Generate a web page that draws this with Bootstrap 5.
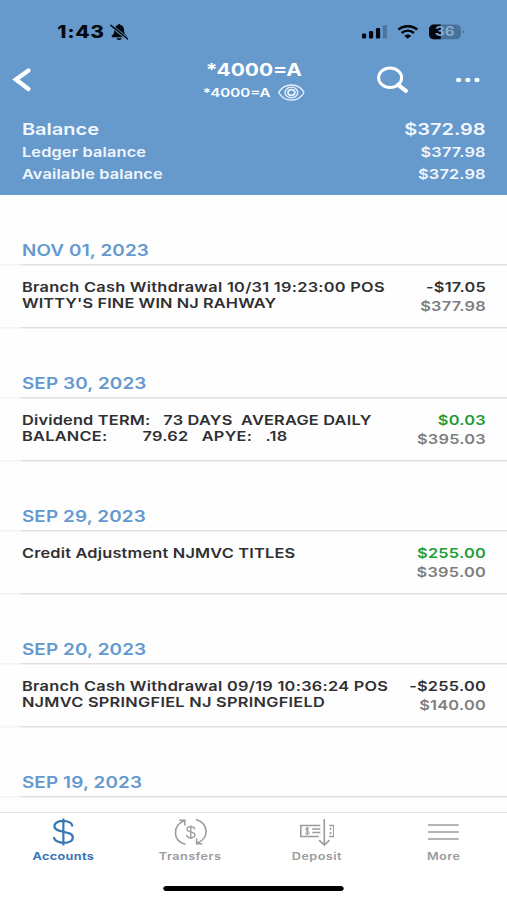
<!DOCTYPE html>
<html lang="en">
<head>
<meta charset="utf-8">
<meta name="viewport" content="width=device-width, initial-scale=1">
<title>Account *4000=A</title>
<link href="https://cdn.jsdelivr.net/npm/bootstrap@5.3.0/dist/css/bootstrap.min.css" rel="stylesheet">
<style>
html,body{overflow:hidden;background:#fff}
body{font-family:Inter,"Liberation Sans",sans-serif;font-weight:600;color:#303033}
/* phone layout, widened horizontally to fill the window */
.phone{width:416px;height:900px;transform:scaleX(1.21875);transform-origin:0 0;overflow:hidden;background:#fefefe}
svg{display:block;flex:none}
.top{background:#6699cc;color:#fff;height:195px}
.status{height:56px;padding:8px 35px 0 47px;color:#05080c}
.clock{font-size:17.2px;font-weight:800;line-height:20px;letter-spacing:.5px}
.bar{height:48px;display:grid;grid-template-columns:1fr auto 1fr;padding:0 22.5px 0 9px}
.ttl{font-size:17.2px;line-height:23px;font-weight:650;padding-top:1px}
.sub{font-size:12.4px;line-height:23px}
.sums{padding:13px 17.5px 0 18px;font-size:13.4px;line-height:22px;color:#f1f7fd;letter-spacing:.13px}
.sums .big{font-size:16.4px;line-height:24px;letter-spacing:0}
.day{height:70px;padding:44px 18px 0;font-size:15.5px;line-height:22px;color:#6499cf;font-weight:600;letter-spacing:.1px}
.line{background:linear-gradient(90deg,#f3f3f3 17px,#e1e1e2 17px) bottom/100% 1.5px no-repeat}
.entry{height:63px;padding:13px 17.3px 0 18px;font-size:13.4px}
.desc{white-space:pre;line-height:16.4px;letter-spacing:.17px}
.desc .wide{letter-spacing:.23px}
.desc .snug{letter-spacing:.1px}
.amt{line-height:18.6px;margin-top:-.6px;letter-spacing:.2px}
.grey{color:#7d7d80}
.green{color:#229c35}
.feed{height:617px;padding-top:.5px;overflow:hidden}
.tabs{height:88px;border-top:1.5px solid #e3e3e4;background:#fff;color:#9b9b9d;font-size:10.4px}
.tab{padding-top:5px}
.tab span{line-height:16px;margin-top:2.5px;letter-spacing:.36px}
.tab.on{color:#3a78b5}
.tab.on span{font-weight:700;font-size:10.3px;letter-spacing:.3px;margin-top:2px}
.home{width:148px;height:5px;border-radius:3px;background:#000;margin:21.5px auto 0}
</style>
<script src="https://cdn.jsdelivr.net/npm/bootstrap@5.3.0/dist/js/bootstrap.bundle.min.js"></script>
</head>
<body>
<div class="phone">
  <header class="top">
    <div class="status d-flex align-items-center">
      <span class="clock">1:43</span>
      <svg class="ms-1" width="15.6" height="18" viewBox="0 0 19 18" preserveAspectRatio="none"><path d="M2 14.2V12.8C4 11.4 4.3 10 4.5 7.4C4.8 4 6.5 2.3 8.3 2C8.5.6 10.5.6 10.7 2C13 2.4 14.3 4 14.5 7.4C14.7 10 15 11.4 17 12.8V14.2ZM6.7 15.2H12.2C11.5 17.6 7.4 17.6 6.7 15.2Z" fill="currentColor"/><path d="M1.2 2.4 18 16" stroke="#6699cc" stroke-width="3.2"/><path d="M1.2 2.4 18 16" stroke="currentColor" stroke-width="1.5" stroke-linecap="round"/></svg>
      <svg class="ms-auto" width="20.5" height="16" viewBox="0 0 25 16" preserveAspectRatio="none" fill="currentColor"><rect y="9.5" width="4.2" height="5" rx="1.2"/><rect x="7" y="7" width="4.2" height="7.5" rx="1.2"/><rect x="14" y="4" width="4.2" height="10.5" rx="1.2"/><rect x="21" y="1.2" width="4" height="13.3" rx="1.2" opacity=".25"/></svg>
      <svg style="margin-left:8.5px" width="17.2" height="14" viewBox="0 0 21 14" preserveAspectRatio="none" fill="none" stroke="currentColor" stroke-width="2.6"><path d="M1 4.6C6.5 0 14.5 0 20 4.6M4.3 8.1C8 5 13 5 16.7 8.1"/><path d="M7 10.8C9 9.2 12 9.2 14 10.8L10.5 13.8Z" fill="currentColor" stroke="none"/></svg>
      <svg style="margin-left:8px" width="29.5" height="16" viewBox="0 0 36 16" preserveAspectRatio="none"><defs><clipPath id="cell"><rect y=".5" width="32" height="14.8" rx="4.8"/></clipPath></defs><g clip-path="url(#cell)"><path d="M0 0H32V16H0Z" fill="#48729a"/><path d="M0 0H11.8V16H0Z" fill="#05080c"/></g><path d="M33.5 6C35.5 6.6 35.5 9 33.5 9.6Z" fill="#48729a"/><text x="6" y="12.5" font-size="12.5" font-weight="700" textLength="19.5" lengthAdjust="spacingAndGlyphs" fill="#83abd3">36</text></svg>
    </div>
    <nav class="bar align-items-center">
      <svg width="18" height="26" viewBox="0 0 22 26" preserveAspectRatio="none" fill="none" stroke="#fff" stroke-width="4.4" stroke-linecap="round" stroke-linejoin="miter"><path d="M17.5 3.5 5 12.5 17.5 22"/></svg>
      <div class="text-center" style="margin-left:14px">
        <div class="ttl">*4000=A</div>
        <div class="sub d-flex align-items-center justify-content-center"><span>*4000=A</span>
          <svg style="margin-left:6px" width="22.2" height="17" viewBox="0 0 27 17" preserveAspectRatio="none" fill="none" stroke="#e8f1fb" stroke-width="1.4"><path d="M.8 8.5C6.5-1.6 20.5-1.6 26.2 8.5C20.5 18.6 6.5 18.6.8 8.5Z"/><ellipse cx="13.5" cy="8.5" rx="6.3" ry="5.4"/><ellipse cx="13.5" cy="8.5" rx="3.4" ry="2.9" stroke-width="1.7"/></svg>
        </div>
      </div>
      <div class="d-flex align-items-center justify-content-end">
        <svg width="26.3" height="28" viewBox="0 0 32 28" preserveAspectRatio="none" fill="none" stroke="#fff" stroke-width="3"><ellipse cx="13.5" cy="11.8" rx="11.5" ry="9.8"/><path d="M21.5 18.8 29.3 24.8" stroke-width="4.2" stroke-linecap="round"/></svg>
        <svg style="margin-left:39px" width="19.7" height="6" viewBox="0 0 24 6" preserveAspectRatio="none" fill="#fff"><ellipse cx="2.8" cy="3" rx="2.6" ry="2.2"/><ellipse cx="12" cy="3" rx="2.6" ry="2.2"/><ellipse cx="21.2" cy="3" rx="2.6" ry="2.2"/></svg>
      </div>
    </nav>
    <div class="sums">
      <div class="big d-flex justify-content-between"><span>Balance</span><span>$372.98</span></div>
      <div class="d-flex justify-content-between"><span>Ledger balance</span><span>$377.98</span></div>
      <div class="d-flex justify-content-between"><span>Available balance</span><span>$372.98</span></div>
    </div>
  </header>
  <main class="feed">
    <div class="day line">NOV 01, 2023</div>
    <div class="entry line d-flex justify-content-between"><div class="desc"><span class="wide">Branch Cash Withdrawal 10/31 19:23:00 POS</span>
<span class="snug">WITTY'S FINE WIN NJ RAHWAY</span></div><div class="amt text-end">-$17.05<div class="grey">$377.98</div></div></div>
    <div class="day line">SEP 30, 2023</div>
    <div class="entry line d-flex justify-content-between"><div class="desc">Dividend TERM:   73 DAYS  AVERAGE DAILY
<span class="wide">BALANCE:        79.62   APYE:   .18</span></div><div class="amt text-end"><span class="green">$0.03</span><div class="grey">$395.03</div></div></div>
    <div class="day line">SEP 29, 2023</div>
    <div class="entry line d-flex justify-content-between"><div class="desc">Credit Adjustment NJMVC TITLES</div><div class="amt text-end"><span class="green">$255.00</span><div class="grey">$395.00</div></div></div>
    <div class="day line">SEP 20, 2023</div>
    <div class="entry line d-flex justify-content-between"><div class="desc"><span class="wide">Branch Cash Withdrawal 09/19 10:36:24 POS
NJMVC SPRINGFIEL NJ SPRINGFIELD</span></div><div class="amt text-end">-$255.00<div class="grey">$140.00</div></div></div>
    <div class="day line">SEP 19, 2023</div>
  </main>
  <footer class="tabs">
    <div class="row g-0">
      <div class="tab on col-3 d-flex flex-column align-items-center">
        <svg width="18" height="28" viewBox="0 0 22 28" preserveAspectRatio="none" fill="none" stroke="currentColor" stroke-width="2.2"><path d="M11 .5V27.5M20 8.5C19.5 1 2 1 2 8.3C2 15.5 20.5 12 20.5 19.5C20.5 27 2 26.5 1.5 19"/></svg>
        <span>Accounts</span>
      </div>
      <div class="tab col-3 d-flex flex-column align-items-center">
        <svg width="27" height="28" viewBox="0 0 33 28" preserveAspectRatio="none" fill="none" stroke="currentColor" stroke-width="1.6"><path d="M11.2 26.5C-2 22.5-2 8 9.8 2.8M5 2.2H10.6V7.5M21.8 1.5C35 5.5 35 20 23.2 25.2M28 25.8H22.4V20.5"/><path d="M16.5 7.5V21M20.5 11.3C20 7.6 12.8 7.9 12.8 11.2C12.8 15 20.7 12.8 20.7 17C20.7 20.8 12.7 20.8 12.3 16.8" stroke-width="1.4"/></svg>
        <span>Transfers</span>
      </div>
      <div class="tab col-3 d-flex flex-column align-items-center">
        <svg width="28.7" height="28" viewBox="0 0 35 28" preserveAspectRatio="none" fill="none" stroke="currentColor" stroke-width="1.6"><path d="M20.5 7.5H1V18.5H19M29.5 7.5H34V18.5H29.5M24.5 1V27M19.3 22.2 24.5 27 29.7 22.2"/><path d="M12.5 11H20.5M12.5 14.5H20.5M30.8 9.7V11.7M30.8 14V16.2M7.5 8.9V17.1"/><path d="M9.4 11C8.8 9.2 5.8 9.6 5.8 11.3C5.8 13.3 9.4 12.5 9.4 14.7C9.4 16.8 5.8 16.6 5.5 14.8" stroke-width="1"/></svg>
        <span>Deposit</span>
      </div>
      <div class="tab col-3 d-flex flex-column align-items-center">
        <svg width="25.4" height="28" viewBox="0 0 31 28" preserveAspectRatio="none" stroke="currentColor" stroke-width="1.5"><path d="M0 7H31M0 14H31M0 21H31"/></svg>
        <span>More</span>
      </div>
    </div>
    <div class="home"></div>
  </footer>
</div>
</body>
</html>
